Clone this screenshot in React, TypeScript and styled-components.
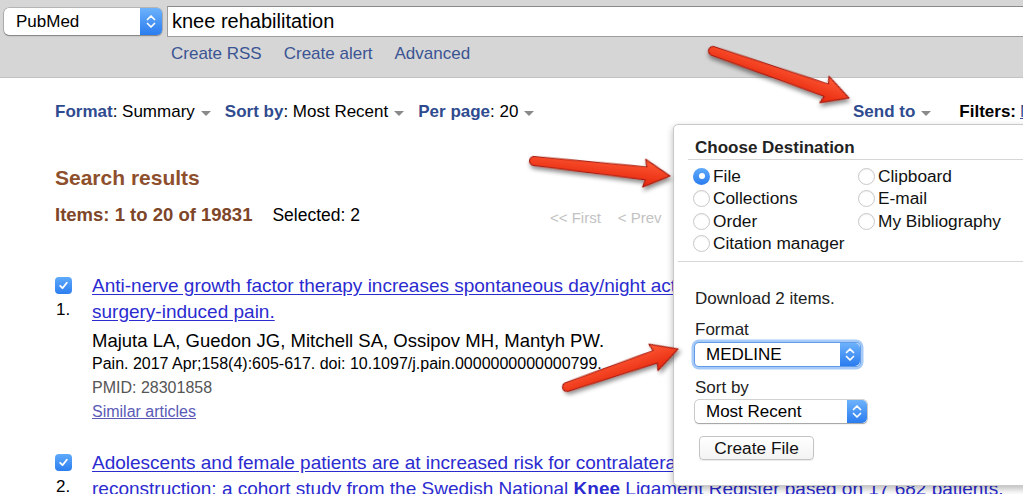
import React from 'react';
import styled, { createGlobalStyle, css } from 'styled-components';

const GlobalStyle = createGlobalStyle`
  html, body { margin: 0; padding: 0; background: #fff; overflow: hidden; }
  body { font-family: "Liberation Sans", Arial, Helvetica, sans-serif; }
  #root { width: 1023px; height: 494px; overflow: hidden; }
`;

const Page = styled.div`
  position: relative;
  width: 1023px;
  height: 494px;
  overflow: hidden;
  font-family: "Liberation Sans", Arial, Helvetica, sans-serif;
  color: #000;
  background: #fff;
`;

/* ---------- Top search bar ---------- */
const TopBar = styled.header`
  box-sizing: border-box;
  height: 78px;
  padding: 6px 0 0 4px;
  background: #d6d6d6;
  border-bottom: 1px solid #c2c2c2;
  overflow: hidden;
`;

const SearchRow = styled.div`
  display: flex;
  align-items: center;
  height: 31px;
  width: 1200px;
`;

const DbSelect = styled.div`
  display: flex;
  align-items: center;
  box-sizing: border-box;
  width: 158px;
  height: 27px;
  padding-left: 12px;
  background: #fff;
  border-radius: 5px;
  box-shadow: 0 0 0 0.5px rgba(0, 0, 0, 0.3), 0 1px 1.5px rgba(0, 0, 0, 0.3);
  font-size: 17px;
`;

const Stepper = styled.span<{ $w: number }>`
  margin-left: auto;
  align-self: stretch;
  width: ${(p) => p.$w}px;
  display: flex;
  align-items: center;
  justify-content: center;
  background: linear-gradient(#6db2fc, #2a7cef);
  border-radius: 0 5px 5px 0;
`;

const SearchInput = styled.div`
  box-sizing: border-box;
  margin-left: 5px;
  width: 1000px;
  height: 31px;
  padding-left: 4px;
  display: flex;
  align-items: center;
  background: #fff;
  border: 1px solid #9d9d9d;
  border-top-color: #8a8a8a;
  font-size: 20px;
`;

const LinksRow = styled.nav`
  display: flex;
  gap: 22px;
  margin-top: 7px;
  padding-left: 167px;
`;

const TopLink = styled.a`
  font-size: 17px;
  line-height: 20px;
  color: #3a5494;
  text-decoration: none;
`;

/* ---------- Main ---------- */
const Main = styled.main`
  padding-left: 55px;
`;

const FormatBar = styled.div`
  display: flex;
  align-items: center;
  margin-top: 24px;
  height: 20px;
  font-size: 17px;
  white-space: nowrap;
`;

const LeftControls = styled.div`
  display: flex;
  flex-shrink: 0;
  align-items: center;
  gap: 14px;
  width: 798px;
`;

const Control = styled.span<{ $ml?: number }>`
  display: inline-flex;
  align-items: center;
  margin-left: ${(p) => p.$ml ?? 0}px;
`;

const CtlLabel = styled.b<{ $dark?: boolean }>`
  color: ${(p) => (p.$dark ? '#000' : '#2f4b8f')};
  font-weight: bold;
`;

const Caret = styled.span`
  display: inline-block;
  width: 0;
  height: 0;
  margin-left: 6px;
  margin-top: 3px;
  border-left: 5px solid transparent;
  border-right: 5px solid transparent;
  border-top: 5px solid #8a8a8a;
`;

const RightControls = styled.div`
  display: flex;
  flex-shrink: 0;
  align-items: center;
`;

const FiltersLink = styled.a`
  margin-left: 4px;
  color: #2f4b8f;
  text-decoration: underline;
`;

const SearchTitle = styled.h2`
  margin: 44px 0 0;
  font-size: 21px;
  line-height: 24px;
  font-weight: bold;
  color: #8e4f2c;
`;

const ItemsRow = styled.div`
  display: flex;
  align-items: center;
  margin-top: 14px;
  height: 22px;
  white-space: nowrap;
`;

const Items = styled.b`
  font-size: 18.5px;
  color: #7e4629;
`;

const Selected = styled.span`
  margin-left: 20px;
  font-size: 17.5px;
`;

const Pager = styled.span`
  display: flex;
  gap: 17px;
  margin: 4px 0 0 190px;
  font-size: 15px;
  color: #c2c2c2;
`;

const Result = styled.article<{ $top: number }>`
  display: grid;
  grid-template-columns: 37px auto;
  margin-top: ${(p) => p.$top}px;
  white-space: nowrap;
`;

const MarkCol = styled.div`
  display: flex;
  flex-direction: column;
`;

const CheckBox = styled.span`
  display: flex;
  align-items: center;
  justify-content: center;
  margin-top: 4px;
  width: 17px;
  height: 17px;
  border-radius: 4px;
  background: linear-gradient(#5eaafb, #2d7ef0);
`;

const Num = styled.span`
  margin-top: 3px;
  padding-left: 1px;
  font-size: 17px;
  line-height: 26px;
`;

const Body = styled.div`
  display: flex;
  flex-direction: column;
`;

const Title = styled.a`
  font-size: 19px;
  line-height: 26px;
  color: #2b2bd0;
  text-decoration: underline;
  text-underline-offset: 2px;
`;

const Authors = styled.div`
  margin-top: 4px;
  font-size: 18.5px;
  line-height: 24px;
`;

const Journal = styled.div`
  font-size: 16px;
  line-height: 22px;
`;

const Pmid = styled.div`
  font-size: 16px;
  line-height: 26px;
  color: #555;
`;

const Similar = styled.a`
  font-size: 16px;
  line-height: 22px;
  color: #5a5ab6;
  text-decoration: underline;
`;

/* ---------- Send-to popup ---------- */
const Popup = styled.section`
  position: absolute;
  left: 673px;
  top: 124px;
  box-sizing: border-box;
  width: 390px;
  height: 362px;
  background: #fff;
  border: 1px solid #c9c9c9;
  border-radius: 5px;
  box-shadow: 0 3px 7px rgba(0, 0, 0, 0.28);
  z-index: 2;
`;

const DestSection = styled.div`
  margin-left: 4px;
  padding-bottom: 6px;
  border-bottom: 1px solid #d6d6d6;
`;

const DestHeader = styled.h3`
  margin: 0 0 0 10px;
  padding: 12px 0 0 7px;
  font-size: 17px;
  line-height: 22px;
  font-weight: bold;
  color: #222;
  border-bottom: 1px solid #d6d6d6;
`;

const RadioGrid = styled.div`
  display: grid;
  grid-template-columns: 165px auto;
  grid-auto-rows: 22.5px;
  margin: 5px 0 0 15px;
`;

const RadioItem = styled.label`
  display: flex;
  align-items: center;
  gap: 3px;
  font-size: 17.3px;
  color: #111;
`;

const RadioDot = styled.span<{ $on?: boolean }>`
  display: flex;
  align-items: center;
  justify-content: center;
  box-sizing: border-box;
  width: 17px;
  height: 17px;
  border-radius: 50%;
  ${(p) =>
    p.$on
      ? css`
          background: linear-gradient(#5ea9fb, #2b7cef);
          &::after {
            content: '';
            width: 6px;
            height: 6px;
            border-radius: 50%;
            background: #fff;
          }
        `
      : css`
          background: #fff;
          border: 1px solid #c8c8c8;
          box-shadow: inset 0 1px 1px rgba(0, 0, 0, 0.06);
        `}
`;

const Download = styled.div`
  display: flex;
  flex-direction: column;
  align-items: flex-start;
  padding-left: 21px;
  padding-top: 26px;
`;

const Text = styled.div<{ $mt: number }>`
  margin-top: ${(p) => p.$mt}px;
  font-size: 17px;
  line-height: 22px;
  color: #222;
`;

const FormSelect = styled.div<{ $w: number; $mt: number; $focus?: boolean }>`
  display: flex;
  align-items: center;
  box-sizing: border-box;
  width: ${(p) => p.$w}px;
  height: 23px;
  margin-top: ${(p) => p.$mt}px;
  padding-left: 11px;
  background: #fff;
  border-radius: 4px;
  font-size: 17px;
  color: #000;
  box-shadow: ${(p) =>
    p.$focus
      ? '0 0 0 1px rgba(90,150,230,.9), 0 0 0 3.5px rgba(120,175,245,.65)'
      : '0 0 0 0.5px rgba(0,0,0,.35), 0 1px 1.5px rgba(0,0,0,.25)'};
`;

const Button = styled.button`
  margin: 13px 0 0 4px;
  box-sizing: border-box;
  width: 115px;
  height: 24px;
  padding: 0;
  font-family: inherit;
  font-size: 17.3px;
  color: #111;
  background: linear-gradient(#ffffff, #f3f3f3);
  border: 1px solid #c4c4c4;
  border-radius: 4px;
  box-shadow: 0 1px 1px rgba(0, 0, 0, 0.08);
`;

/* ---------- Arrow overlay ---------- */
const Overlay = styled.svg`
  position: absolute;
  left: 0;
  top: 0;
  width: 1023px;
  height: 494px;
  pointer-events: none;
  z-index: 5;
`;

const Chevrons = ({ h = 22 }: { h?: number }) => (
  <svg width="12" height={h} viewBox={`0 0 12 ${h}`}>
    <path
      d={`M2.5 ${h / 2 - 2} L6 ${h / 2 - 5.5} L9.5 ${h / 2 - 2} M2.5 ${h / 2 + 2} L6 ${h / 2 + 5.5} L9.5 ${h / 2 + 2}`}
      stroke="#fff"
      strokeWidth="1.7"
      fill="none"
      strokeLinecap="round"
      strokeLinejoin="round"
    />
  </svg>
);

const Tick = () => (
  <svg width="11" height="11" viewBox="0 0 11 11">
    <path d="M2.2 5.8 L4.5 8.2 L8.8 2.8" stroke="#fff" strokeWidth="1.8" fill="none" strokeLinecap="round" strokeLinejoin="round" />
  </svg>
);

const Arrow = ({ x1, y1, x2, y2 }: { x1: number; y1: number; x2: number; y2: number }) => {
  const dx = x2 - x1;
  const dy = y2 - y1;
  const len = Math.sqrt(dx * dx + dy * dy);
  const ang = (Math.atan2(dy, dx) * 180) / Math.PI;
  const hl = 24;
  const d = `M0,-4.5 L${len - hl},-6.5 L${len - hl - 2},-14 L${len},0 L${len - hl - 2},14 L${len - hl},6.5 L0,4.5 A4.5,4.5 0 0 1 0,-4.5 Z`;
  return (
    <path
      d={d}
      transform={`translate(${x1} ${y1}) rotate(${ang})`}
      fill="url(#arrowFill)"
      stroke="#a3170a"
      strokeWidth="1.1"
      strokeLinejoin="round"
      filter="url(#arrowShadow)"
    />
  );
};

export default function App() {
  return (
    <Page>
      <GlobalStyle />
      <TopBar>
        <SearchRow>
          <DbSelect>
            PubMed
            <Stepper $w={22}>
              <Chevrons h={27} />
            </Stepper>
          </DbSelect>
          <SearchInput>knee rehabilitation</SearchInput>
        </SearchRow>
        <LinksRow>
          <TopLink>Create RSS</TopLink>
          <TopLink>Create alert</TopLink>
          <TopLink>Advanced</TopLink>
        </LinksRow>
      </TopBar>

      <Main>
        <FormatBar>
          <LeftControls>
            <Control>
              <CtlLabel>Format</CtlLabel>: Summary
              <Caret />
            </Control>
            <Control>
              <CtlLabel>Sort by</CtlLabel>: Most Recent
              <Caret />
            </Control>
            <Control>
              <CtlLabel>Per page</CtlLabel>: 20
              <Caret />
            </Control>
          </LeftControls>
          <RightControls>
            <Control>
              <CtlLabel>Send to</CtlLabel>
              <Caret />
            </Control>
            <Control $ml={28}>
              <CtlLabel $dark>Filters:</CtlLabel>
              <FiltersLink>Manage Filters</FiltersLink>
            </Control>
          </RightControls>
        </FormatBar>

        <SearchTitle>Search results</SearchTitle>
        <ItemsRow>
          <Items>Items: 1 to 20 of 19831</Items>
          <Selected>Selected: 2</Selected>
          <Pager>
            <span>&lt;&lt; First</span>
            <span>&lt; Prev</span>
          </Pager>
        </ItemsRow>

        <Result $top={47}>
          <MarkCol>
            <CheckBox>
              <Tick />
            </CheckBox>
            <Num>1.</Num>
          </MarkCol>
          <Body>
            <Title>
              Anti-nerve growth factor therapy increases spontaneous day/night activity in mice with orthopedic
              <br />
              surgery-induced pain.
            </Title>
            <Authors>Majuta LA, Guedon JG, Mitchell SA, Ossipov MH, Mantyh PW.</Authors>
            <Journal>Pain. 2017 Apr;158(4):605-617. doi: 10.1097/j.pain.0000000000000799.</Journal>
            <Pmid>PMID: 28301858</Pmid>
            <div>
              <Similar>Similar articles</Similar>
            </div>
          </Body>
        </Result>

        <Result $top={27}>
          <MarkCol>
            <CheckBox>
              <Tick />
            </CheckBox>
            <Num>2.</Num>
          </MarkCol>
          <Body>
            <Title>
              Adolescents and female patients are at increased risk for contralateral anterior cruciate ligament
              <br />
              reconstruction: a cohort study from the Swedish National <b>Knee</b> Ligament Register based on 17 682 patients.
            </Title>
          </Body>
        </Result>
      </Main>

      <Popup>
        <DestSection>
          <DestHeader>Choose Destination</DestHeader>
          <RadioGrid>
            <RadioItem>
              <RadioDot $on />
              File
            </RadioItem>
            <RadioItem>
              <RadioDot />
              Clipboard
            </RadioItem>
            <RadioItem>
              <RadioDot />
              Collections
            </RadioItem>
            <RadioItem>
              <RadioDot />
              E-mail
            </RadioItem>
            <RadioItem>
              <RadioDot />
              Order
            </RadioItem>
            <RadioItem>
              <RadioDot />
              My Bibliography
            </RadioItem>
            <RadioItem>
              <RadioDot />
              Citation manager
            </RadioItem>
          </RadioGrid>
        </DestSection>
        <Download>
          <Text $mt={0}>Download 2 items.</Text>
          <Text $mt={9}>Format</Text>
          <FormSelect $w={165} $mt={2} $focus>
            MEDLINE
            <Stepper $w={20}>
              <Chevrons h={23} />
            </Stepper>
          </FormSelect>
          <Text $mt={11}>Sort by</Text>
          <FormSelect $w={172} $mt={1}>
            Most Recent
            <Stepper $w={20}>
              <Chevrons h={23} />
            </Stepper>
          </FormSelect>
          <Button>Create File</Button>
        </Download>
      </Popup>

      <Overlay viewBox="0 0 1023 494">
        <defs>
          <linearGradient id="arrowFill" x1="0" y1="0" x2="0" y2="1">
            <stop offset="0" stopColor="#ff5c38" />
            <stop offset="1" stopColor="#e5250b" />
          </linearGradient>
          <filter id="arrowShadow" x="-20%" y="-50%" width="140%" height="200%">
            <feDropShadow dx="1.5" dy="3" stdDeviation="2.2" floodColor="#000" floodOpacity="0.45" />
          </filter>
        </defs>
        <Arrow x1={713} y1={51} x2={849} y2={98} />
        <Arrow x1={534} y1={161} x2={670} y2={176} />
        <Arrow x1={567} y1={387} x2={678} y2={349} />
      </Overlay>
    </Page>
  );
}
